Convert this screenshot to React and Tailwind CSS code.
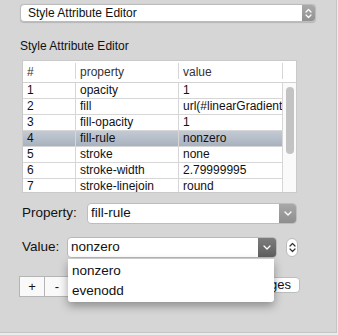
const font = { fontFamily: '"Liberation Sans", Arial, sans-serif' };

const rows = [
    ['1', 'opacity', '1'],
    ['2', 'fill', 'url(#linearGradient'],
    ['3', 'fill-opacity', '1'],
    ['4', 'fill-rule', 'nonzero'],
    ['5', 'stroke', 'none'],
    ['6', 'stroke-width', '2.79999995'],
    ['7', 'stroke-linejoin', 'round'],
];

// small chevrons used by the popup buttons
const ChevronDown = ({ color = '#fff' }) => (
    <svg width="8" height="5" viewBox="0 0 8 5" fill="none">
        <path d="M1 1 L4 4 L7 1" stroke={color} strokeWidth="1.3" strokeLinecap="round" strokeLinejoin="round" />
    </svg>
);

const UpDown = ({ color = '#fff' }) => (
    <svg width="7" height="11" viewBox="0 0 7 11" fill="none">
        <path d="M1 4 L3.5 1.5 L6 4" stroke={color} strokeWidth="1.2" strokeLinecap="round" strokeLinejoin="round" />
        <path d="M1 7 L3.5 9.5 L6 7" stroke={color} strokeWidth="1.2" strokeLinecap="round" strokeLinejoin="round" />
    </svg>
);

const HeaderCell = ({ width, children }) => (
    <div
        className={`relative flex items-center pl-[4px] text-[12px] text-[#333] ${width} after:absolute after:right-0 after:top-[2px] after:bottom-[3px] after:w-px after:bg-[#d6d6d6]`}
    >
        {children}
    </div>
);

export default function App() {
    return (
        <div className="w-[338px] h-[335px] bg-[#ececec]" style={font}>
            <div className="relative flex flex-col w-[337px] h-[333px] bg-[#d6d6d6] border-r border-b border-[#c6c6c6] pt-[4px] text-[#111]">
                {/* Top popup */}
                <div className="ml-[20px] w-[296px] h-[18px] flex rounded-[4px] border border-[#bcbcbc] bg-white overflow-hidden shadow-[0_0.5px_1px_rgba(0,0,0,0.15)]">
                    <div className="flex-1 flex items-center pl-[7px] text-[12px] leading-[16px]">Style Attribute Editor</div>
                    <div className="w-[13px] flex items-center justify-center bg-gradient-to-b from-[#aaaaaa] to-[#929292]">
                        <UpDown />
                    </div>
                </div>

                {/* Section label */}
                <div className="mt-[16px] ml-[20px] text-[12px] leading-[16px]">Style Attribute Editor</div>

                {/* Table */}
                <div className="mt-[6px] ml-[22px] w-[275px] h-[133px] flex flex-col border border-[#cacaca] bg-white overflow-hidden">
                    <div className="flex h-[22px] shrink-0 border-b border-[#d2d2d2]">
                        <HeaderCell width="w-[53px]">#</HeaderCell>
                        <HeaderCell width="w-[103px]">property</HeaderCell>
                        <HeaderCell width="w-[104px]">value</HeaderCell>
                        <div className="flex-1" />
                    </div>
                    <div className="flex flex-1 min-h-0">
                        <div className="w-[260px] flex flex-col">
                            {rows.map(([n, prop, val]) => (
                                <div
                                    key={n}
                                    className={`flex h-[16px] shrink-0 border-b border-[#d6d6d6] text-[12px] leading-[15px] ${
                                        n === '4' ? 'bg-gradient-to-b from-[#c3cad4] to-[#a8b2bf]' : ''
                                    }`}
                                >
                                    <div className="w-[53px] pl-[4px] border-r border-[#d6d6d6]">{n}</div>
                                    <div className="w-[103px] pl-[4px] border-r border-[#d6d6d6] whitespace-nowrap overflow-hidden">{prop}</div>
                                    <div className="w-[104px] pl-[4px] border-r border-[#d6d6d6] whitespace-nowrap overflow-hidden">{val}</div>
                                </div>
                            ))}
                        </div>
                        <div className="flex-1 bg-[#fafafa] flex justify-center">
                            <div className="mt-[4px] w-[8px] h-[67px] rounded-full bg-[#c3c3c3]" />
                        </div>
                    </div>
                </div>

                {/* Property */}
                <div className="mt-[10px] ml-[22px] flex items-center h-[21px]">
                    <div className="w-[65px] text-[13.5px]">Property:</div>
                    <div className="w-[210px] h-[21px] flex rounded-[4px] border border-[#bdbdbd] bg-white overflow-hidden">
                        <div className="flex-1 flex items-center pl-[3px] text-[13.5px]">fill-rule</div>
                        <div className="w-[17px] flex items-center justify-center bg-gradient-to-b from-[#a8a8a8] to-[#8e8e8e]">
                            <ChevronDown />
                        </div>
                    </div>
                </div>

                {/* Value */}
                <div className="mt-[13px] ml-[22px] flex items-center h-[21px]">
                    <div className="w-[45px] text-[13.5px]">Value:</div>
                    <div className="w-[210px] h-[21px] flex rounded-[4px] border border-[#b8b8b8] bg-white overflow-hidden">
                        <div className="flex-1 flex items-center pl-[3px] text-[13.5px]">nonzero</div>
                        <div className="w-[18px] flex items-center justify-center bg-gradient-to-b from-[#7c7c7c] to-[#5f5f5f]">
                            <ChevronDown />
                        </div>
                    </div>
                    <div className="ml-[9px] w-[12px] h-[19px] flex items-center justify-center rounded-full border border-[#bdbdbd] bg-white">
                        <UpDown color="#333" />
                    </div>
                </div>

                {/* Buttons */}
                <div className="mt-[18px] ml-[19px] mr-[36px] flex items-start">
                    <div className="w-[26px] h-[21px] flex items-center justify-center border border-[#b5b5b5] bg-[#f9f9f9] text-[13px]">+</div>
                    <div className="-ml-px w-[26px] h-[21px] flex items-center justify-center border border-[#b5b5b5] bg-[#f9f9f9] text-[13px]">-</div>
                    <div className="ml-auto mt-[1px] h-[16px] px-[8px] flex items-center rounded-[4px] border border-[#bdbdbd] bg-white text-[13px] leading-[14px]">
                        Apply Changes
                    </div>
                </div>

                {/* Open combo list */}
                <div className="absolute left-[68px] top-[259px] w-[206px] h-[43px] bg-white pt-[2px] shadow-[0_4px_10px_rgba(0,0,0,0.35)] rounded-b-[3px]">
                    <div className="h-[20px] flex items-center pl-[4px] text-[13.5px]">nonzero</div>
                    <div className="h-[20px] flex items-center pl-[4px] text-[13.5px]">evenodd</div>
                </div>
            </div>
        </div>
    );
}
